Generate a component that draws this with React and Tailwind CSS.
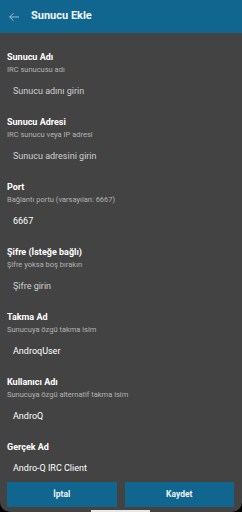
import React from "react";

const font = { fontFamily: "Roboto, 'Noto Sans', sans-serif" };

function Field({ label, sub, value, placeholder }) {
  return (
    <div className="flex flex-col">
      <div className="h-[14px] pl-[7px] text-[9px] font-bold leading-[14px] text-white">{label}</div>
      {sub && (
        <div className="h-[12px] pl-[7px] text-[7.5px] leading-[12px] text-[#b4b4b4]">{sub}</div>
      )}
      <div className={`${sub ? "mt-[3px]" : "mt-[2px]"} flex h-[26px] items-center pl-[13px]`}>
        {value ? (
          <span className="text-[9px] text-white">{value}</span>
        ) : (
          <span className="text-[9px] text-[#cfcfcf]">{placeholder}</span>
        )}
      </div>
      {sub && <div className="h-[10px]" />}
    </div>
  );
}

export default function App() {
  return (
    <div style={font} className="h-[512px] w-[242px] overflow-hidden bg-black">
      <div className="relative h-[512px] w-[242px] overflow-hidden rounded-b-[10px] bg-[#434343]">
        <div className="flex h-[33px] items-center bg-[#10668f]">
          <svg width="12" height="10" viewBox="0 0 12 10" className="ml-[8px]">
            <path d="M11 5H1.5M5.5 1.2L1.7 5l3.8 3.8" fill="none" stroke="#a9c6d6" strokeWidth="0.9" />
          </svg>
          <span className="ml-[11px] text-[11px] font-bold text-[#f2f6f8]">Sunucu Ekle</span>
        </div>
        <div className="flex flex-col pt-[17px]">
          <Field label="Sunucu Adı" sub="IRC sunucusu adı" placeholder="Sunucu adını girin" />
          <Field label="Sunucu Adresi" sub="IRC sunucu veya IP adresi" placeholder="Sunucu adresini girin" />
          <Field label="Port" sub="Bağlantı portu (varsayılan: 6667)" value="6667" />
          <Field label="Şifre (İsteğe bağlı)" sub="Şifre yoksa boş bırakın" placeholder="Şifre girin" />
          <Field label="Takma Ad" sub="Sunucuya özgü takma isim" value="AndroqUser" />
          <Field label="Kullanıcı Adı" sub="Sunucuya özgü alternatif takma isim" value="AndroQ" />
          <Field label="Gerçek Ad" value="Andro-Q IRC Client" />
          <div className="flex gap-[8px] pl-[7px] pr-[8px]">
            <div className="flex h-[25px] flex-1 items-center justify-center bg-[#10668f] text-[8.5px] font-bold text-[#eef3f6]">
              İptal
            </div>
            <div className="flex h-[25px] flex-1 items-center justify-center bg-[#10668f] text-[8.5px] font-bold text-[#eef3f6]">
              Kaydet
            </div>
          </div>
        </div>
        <div className="absolute bottom-0 left-[91px] h-[2px] w-[59px] bg-[#e8e8e8]" />
      </div>
    </div>
  );
}
